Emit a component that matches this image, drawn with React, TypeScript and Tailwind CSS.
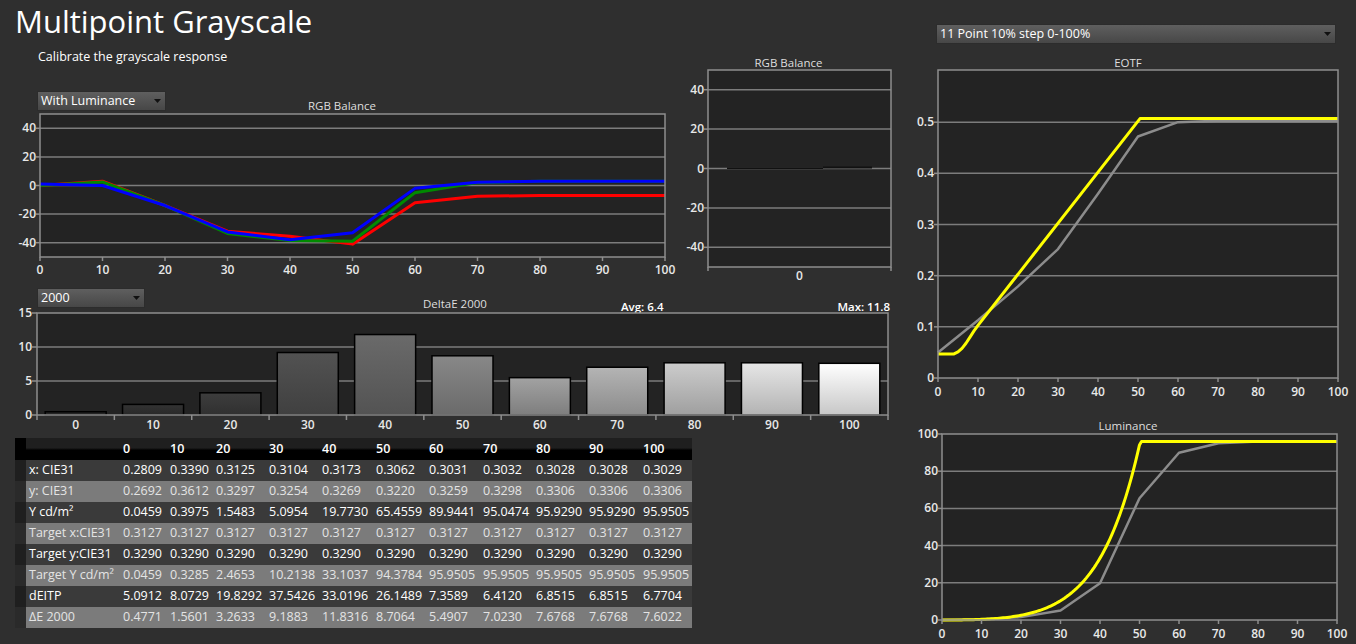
import React from 'react';

type Pt = [number, number];

interface Series {
  color: string;
  width: number;
  pts: Pt[];
}

interface ChartProps {
  width: number;
  height: number;
  l: number;
  t: number;
  r: number;
  b: number;
  x0: number;
  x1: number;
  y0: number;
  y1: number;
  xTicks: number[];
  yTicks: number[];
  grid: number[];
  labelY: number;
  fmt?: (v: number) => string;
  series: Series[];
}

const AXIS = "fill-[#e8e8e8] text-[12px] font-semibold font-['Open_Sans',sans-serif]";
const STEPS = [0, 10, 20, 30, 40, 50, 60, 70, 80, 90, 100];

const LineChart: React.FC<ChartProps> = (p) => {
  const X = (v: number) => p.l + ((v - p.x0) / (p.x1 - p.x0)) * (p.r - p.l);
  const Y = (v: number) => p.b - ((v - p.y0) / (p.y1 - p.y0)) * (p.b - p.t);
  const fmt = p.fmt ?? ((v: number) => String(v));
  return (
    <svg width={p.width} height={p.height} className="block overflow-visible">
      <rect x={p.l} y={p.t} width={p.r - p.l} height={p.b - p.t} fill="#232323" />
      {p.grid.map((v) => (
        <line key={v} x1={p.l} x2={p.r} y1={Y(v)} y2={Y(v)} stroke="#7c7c7c" strokeWidth={1.5} />
      ))}
      {p.series.map((s, i) => (
        <polyline
          key={i}
          points={s.pts.map(([x, y]) => `${X(x)},${Y(y)}`).join(' ')}
          fill="none"
          stroke={s.color}
          strokeWidth={s.width}
          strokeLinejoin="round"
        />
      ))}
      <rect x={p.l} y={p.t} width={p.r - p.l} height={p.b - p.t} fill="none" stroke="#8e8e8e" strokeWidth={1.5} />
      {p.yTicks.map((v) => (
        <g key={v}>
          <line x1={p.l - 4} x2={p.l} y1={Y(v)} y2={Y(v)} stroke="#8e8e8e" strokeWidth={1.5} />
          <text x={p.l - 4} y={Y(v) + 4} textAnchor="end" className={AXIS}>
            {fmt(v)}
          </text>
        </g>
      ))}
      {p.xTicks.map((v) => (
        <g key={v}>
          <line x1={X(v)} x2={X(v)} y1={p.b} y2={p.b + 4} stroke="#8e8e8e" strokeWidth={1.5} />
          <text x={X(v)} y={p.labelY} textAnchor="middle" className={AXIS}>
            {v}
          </text>
        </g>
      ))}
    </svg>
  );
};

// RGB balance, % per step
const red = [0, 3, -14, -32, -35.5, -41, -12, -7.5, -7, -7, -7];
const green = [0, 2.5, -14, -33.5, -38.5, -39, -5, 2, 3, 3, 3];
const blue = [1, 0, -14, -32.5, -38, -33, -2, 2.3, 3, 3, 3];
const zip = (ys: number[]): Pt[] => ys.map((y, i) => [STEPS[i], y]);

// target EOTF (PQ signal)
const eotfTarget: Pt[] = [
  [0, 0.047], [4, 0.047], [5, 0.051], [6, 0.058], [7, 0.068], [8, 0.08], [9, 0.092],
  [10, 0.103], [50.5, 0.507], [100, 0.507],
];
const eotfMeasured = [0.05, 0.113, 0.179, 0.252, 0.36, 0.472, 0.5, 0.503, 0.503, 0.503, 0.503];
const lumMeasured = [0.0459, 0.3975, 1.5483, 5.0954, 19.773, 65.4559, 89.9441, 95.0474, 95.929, 95.929, 95.9505];

const interp = (pts: Pt[], x: number) => {
  for (let i = 1; i < pts.length; i++) {
    const [xa, ya] = pts[i - 1];
    const [xb, yb] = pts[i];
    if (x <= xb) return ya + ((x - xa) / (xb - xa)) * (yb - ya);
  }
  return pts[pts.length - 1][1];
};

const pq = (e: number) => {
  const m1 = 0.1593017578125, m2 = 78.84375, c1 = 0.8359375, c2 = 18.8515625, c3 = 18.6875;
  const p = Math.pow(e, 1 / m2);
  return 10000 * Math.pow(Math.max(p - c1, 0) / (c2 - c3 * p), 1 / m1);
};

const lumTarget: Pt[] = Array.from({ length: 201 }, (_, i) => {
  const x = i / 2;
  return [x, Math.min(pq(interp(eotfTarget, x)), 95.95)];
});

const deltaE = [0.4771, 1.5601, 3.2633, 9.1883, 11.8316, 8.7064, 5.4907, 7.023, 7.6768, 7.6768, 7.6022];
const barGray = [0x2a, 0x33, 0x3d, 0x52, 0x6a, 0x88, 0xa2, 0xb4, 0xcc, 0xe6, 0xff];

const rows: { label: string; vals: string[] }[] = [
  { label: 'x: CIE31', vals: ['0.2809', '0.3390', '0.3125', '0.3104', '0.3173', '0.3062', '0.3031', '0.3032', '0.3028', '0.3028', '0.3029'] },
  { label: 'y: CIE31', vals: ['0.2692', '0.3612', '0.3297', '0.3254', '0.3269', '0.3220', '0.3259', '0.3298', '0.3306', '0.3306', '0.3306'] },
  { label: 'Y cd/m²', vals: ['0.0459', '0.3975', '1.5483', '5.0954', '19.7730', '65.4559', '89.9441', '95.0474', '95.9290', '95.9290', '95.9505'] },
  { label: 'Target x:CIE31', vals: ['0.3127', '0.3127', '0.3127', '0.3127', '0.3127', '0.3127', '0.3127', '0.3127', '0.3127', '0.3127', '0.3127'] },
  { label: 'Target y:CIE31', vals: ['0.3290', '0.3290', '0.3290', '0.3290', '0.3290', '0.3290', '0.3290', '0.3290', '0.3290', '0.3290', '0.3290'] },
  { label: 'Target Y cd/m²', vals: ['0.0459', '0.3285', '2.4653', '10.2138', '33.1037', '94.3784', '95.9505', '95.9505', '95.9505', '95.9505', '95.9505'] },
  { label: 'dEITP', vals: ['5.0912', '8.0729', '19.8292', '37.5426', '33.0196', '26.1489', '7.3589', '6.4120', '6.8515', '6.8515', '6.7704'] },
  { label: 'ΔE 2000', vals: ['0.4771', '1.5601', '3.2633', '9.1883', '11.8316', '8.7064', '5.4907', '7.0230', '7.6768', '7.6768', '7.6022'] },
];
const colW = [47, 46, 53, 53, 54, 53, 54, 53, 53, 54, 52];

const Select: React.FC<{ label: string; className?: string }> = ({ label, className }) => (
  <div
    className={`flex h-[20px] shrink-0 items-center justify-between border border-[#2c2c2c] bg-gradient-to-b from-[#5f5f5f] to-[#474747] pl-[3px] pr-[4px] text-[12.5px] leading-none text-white ${className ?? ''}`}
  >
    <span>{label}</span>
    <svg width="7" height="4" viewBox="0 0 7 4">
      <path d="M0 0H7L3.5 4Z" fill="#111" />
    </svg>
  </div>
);

const SmallBalance: React.FC = () => {
  const l = 36, r = 219, t = 0, b = 197;
  const Y = (v: number) => b - ((v + 50) / 100) * (b - t);
  return (
    <svg width={233} height={215} className="block overflow-visible">
      <rect x={l} y={t} width={r - l} height={b - t} fill="#232323" />
      {[-40, -20, 0, 20, 40].map((v) => (
        <line key={v} x1={l} x2={r} y1={Y(v)} y2={Y(v)} stroke="#7c7c7c" strokeWidth={1.5} />
      ))}
      <rect x={55} y={97.5} width={96} height={1.5} fill="#111" />
      <rect x={151} y={96.5} width={49} height={2} fill="#111" />
      <rect x={l} y={t} width={r - l} height={b - t} fill="none" stroke="#8e8e8e" strokeWidth={1.5} />
      {[-40, -20, 0, 20, 40].map((v) => (
        <g key={v}>
          <line x1={l - 4} x2={l} y1={Y(v)} y2={Y(v)} stroke="#8e8e8e" strokeWidth={1.5} />
          <text x={l - 4} y={Y(v) + 4} textAnchor="end" className={AXIS}>
            {v}
          </text>
        </g>
      ))}
      <line x1={l} x2={l} y1={b} y2={b + 4} stroke="#8e8e8e" strokeWidth={1.5} />
      <line x1={r} x2={r} y1={b} y2={b + 4} stroke="#8e8e8e" strokeWidth={1.5} />
      <text x={(l + r) / 2} y={210} textAnchor="middle" className={AXIS}>
        0
      </text>
    </svg>
  );
};

const DeltaBars: React.FC = () => {
  const l = 37, r = 888, t = 0, b = 102;
  const cw = (r - l) / 11;
  const Y = (v: number) => b - (v / 15) * (b - t);
  return (
    <svg width={905} height={119} className="block overflow-visible">
      <defs>
        {barGray.map((g, i) => (
          <linearGradient key={i} id={`bar${i}`} x1="0" y1="0" x2="0" y2="1">
            <stop offset="0" stopColor={`rgb(${g},${g},${g})`} />
            <stop offset="1" stopColor={`rgb(${Math.round(g * 0.78)},${Math.round(g * 0.78)},${Math.round(g * 0.78)})`} />
          </linearGradient>
        ))}
      </defs>
      <rect x={l} y={t} width={r - l} height={b - t} fill="#232323" />
      {[5, 10].map((v) => (
        <line key={v} x1={l} x2={r} y1={Y(v)} y2={Y(v)} stroke="#7c7c7c" strokeWidth={1.5} />
      ))}
      {deltaE.map((v, i) => (
        <rect
          key={i}
          x={l + i * cw + (cw - 61) / 2}
          y={Y(v)}
          width={61}
          height={b - Y(v)}
          fill={`url(#bar${i})`}
          stroke="#000"
          strokeWidth={1.5}
        />
      ))}
      <rect x={l} y={t} width={r - l} height={b - t} fill="none" stroke="#8e8e8e" strokeWidth={1.5} />
      {[0, 5, 10, 15].map((v) => (
        <g key={v}>
          <line x1={l - 5} x2={l} y1={Y(v)} y2={Y(v)} stroke="#8e8e8e" strokeWidth={1.5} />
          <text x={l - 5} y={Y(v) + 4} textAnchor="end" className={AXIS}>
            {v}
          </text>
        </g>
      ))}
      {Array.from({ length: 12 }, (_, k) => (
        <line key={k} x1={l + k * cw} x2={l + k * cw} y1={b} y2={b + 5} stroke="#8e8e8e" strokeWidth={1.5} />
      ))}
      {STEPS.map((s, i) => (
        <text key={s} x={l + (i + 0.5) * cw} y={115.5} textAnchor="middle" className={AXIS}>
          {s}
        </text>
      ))}
    </svg>
  );
};

const DataTable: React.FC = () => (
  <table className="ml-[15px] w-[677px] table-fixed border-collapse text-[12.5px] leading-none">
    <colgroup>
      <col className="w-[11px]" />
      <col className="w-[94px]" />
      {colW.map((w, i) => (
        <col key={i} style={{ width: w }} />
      ))}
    </colgroup>
    <thead>
      <tr className="h-[22px] bg-[linear-gradient(#1f1f1f_0%,#1f1f1f_45%,#000_55%,#000_100%)]">
        <th className="bg-black p-0" />
        <th className="p-0" />
        {STEPS.map((s) => (
          <th key={s} className="p-0 pl-[3px] text-left font-semibold text-white">
            {s}
          </th>
        ))}
      </tr>
    </thead>
    <tbody>
      {rows.map((row, ri) => {
        const light = ri % 2 === 1;
        return (
          <tr key={row.label} className={`h-[21px] ${light ? 'bg-[#7b7b7b] text-[#e4e4e4]' : 'bg-[#3a3a3a] text-white'}`}>
            <td className={`p-0 ${light ? 'bg-[#2a2a2a]' : 'bg-[#1f1f1f]'}`} />
            <td className="whitespace-nowrap p-0 pl-[3px]">{row.label}</td>
            {row.vals.map((v, i) => (
              <td key={i} className="whitespace-nowrap p-0 pl-[3px]">
                {v}
              </td>
            ))}
          </tr>
        );
      })}
    </tbody>
  </table>
);

export default function App() {
  return (
    <div className="flex h-[644px] w-[1356px] overflow-hidden bg-[#2f2f2f] font-['Open_Sans',sans-serif] text-white">
      <div className="flex w-[905px] shrink-0 flex-col">
        <h1 className="pl-[15px] text-[31px] font-normal leading-[43px]">Multipoint Grayscale</h1>
        <div className="flex h-[242px]">
          <div className="flex w-[672px] flex-col">
            <p className="mt-[5px] pl-[38px] text-[12.5px] leading-[17px]">Calibrate the grayscale response</p>
            <div className="mt-[26px] flex h-[22px]">
              <Select label="With Luminance" className="ml-[37px] w-[129px]" />
              <div className="w-[352px] self-end text-center text-[11.5px] leading-[14px] text-[#dedede]">RGB Balance</div>
            </div>
            <LineChart
              width={672}
              height={172}
              l={40}
              t={1}
              r={665}
              b={144}
              x0={0}
              x1={100}
              y0={-50}
              y1={50}
              xTicks={STEPS}
              yTicks={[-40, -20, 0, 20, 40]}
              grid={[-40, -20, 0, 20, 40]}
              labelY={161}
              series={[
                { color: '#ff0000', width: 3, pts: zip(red) },
                { color: '#008a00', width: 3, pts: zip(green) },
                { color: '#0000ff', width: 3, pts: zip(blue) },
              ]}
            />
          </div>
          <div className="flex w-[233px] flex-col">
            <div className="mt-[13px] h-[14px] text-center text-[11.5px] leading-[14px] text-[#dedede]">RGB Balance</div>
            <SmallBalance />
          </div>
        </div>
        <div className="flex h-[28px] w-[890px] items-start">
          <div className="w-[145px] shrink-0">
            <Select label="2000" className="ml-[37px] mt-[3px] w-[108px]" />
          </div>
          <div className="mt-[12px] w-[476px] shrink-0 pl-[278px] text-[11.5px] leading-[14px] text-[#dedede]">DeltaE 2000</div>
          <div className="mt-[15px] w-[120px] shrink-0 text-[11.5px] font-semibold leading-[14px]">Avg: 6.4</div>
          <div className="mt-[15px] flex-1 text-right text-[11.5px] font-semibold leading-[14px]">Max: 11.8</div>
        </div>
        <DeltaBars />
        <div className="mt-[6px]">
          <DataTable />
        </div>
      </div>
      <div className="flex w-[451px] flex-col">
        <Select label="11 Point 10% step 0-100%" className="ml-[31px] mt-[24px] w-[400px]" />
        <div className="mt-[12px] h-[14px] w-[446px] text-center text-[11.5px] leading-[14px] text-[#dedede]">EOTF</div>
        <LineChart
          width={451}
          height={349}
          l={33}
          t={0}
          r={433}
          b={308}
          x0={0}
          x1={100}
          y0={0}
          y1={0.602}
          xTicks={STEPS}
          yTicks={[0, 0.1, 0.2, 0.3, 0.4, 0.5]}
          grid={[0.1, 0.2, 0.3, 0.4, 0.5]}
          labelY={326}
          fmt={(v) => (v === 0 ? '0' : v.toFixed(1))}
          series={[
            { color: '#8c8c8c', width: 2.5, pts: zip(eotfMeasured) },
            { color: '#ffff00', width: 3, pts: eotfTarget },
          ]}
        />
        <div className="h-[14px] w-[446px] text-center text-[11.5px] leading-[14px] text-[#dedede]">Luminance</div>
        <LineChart
          width={451}
          height={211}
          l={37}
          t={1}
          r={432}
          b={187}
          x0={0}
          x1={100}
          y0={0}
          y1={100}
          xTicks={STEPS}
          yTicks={[0, 20, 40, 60, 80, 100]}
          grid={[20, 40, 60, 80]}
          labelY={205}
          series={[
            { color: '#8c8c8c', width: 2.5, pts: zip(lumMeasured) },
            { color: '#ffff00', width: 3, pts: lumTarget },
          ]}
        />
      </div>
    </div>
  );
}
